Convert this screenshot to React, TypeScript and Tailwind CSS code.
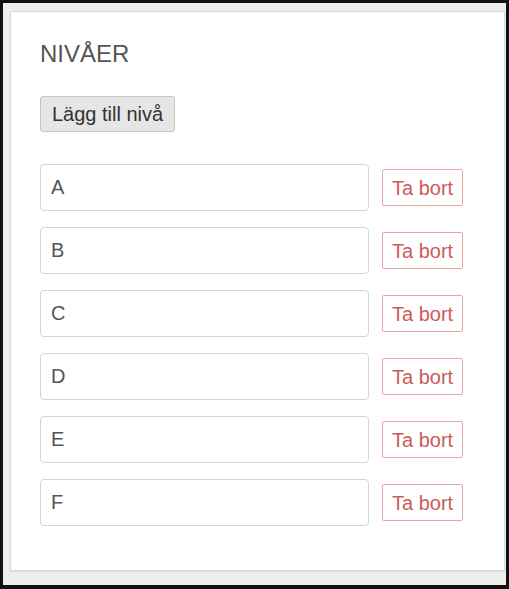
import { useState } from 'react';

const initialLevels = ['A', 'B', 'C', 'D', 'E', 'F'];

export default function App() {
  const [levels, setLevels] = useState<string[]>(initialLevels);

  const addLevel = () => setLevels((prev) => [...prev, '']);
  const removeLevel = (index: number) => setLevels((prev) => prev.filter((_, i) => i !== index));
  const updateLevel = (index: number, value: string) =>
    setLevels((prev) => prev.map((level, i) => (i === index ? value : level)));

  return (
    <div className="w-[509px] h-[589px] overflow-hidden border-l-[3px] border-t-[3px] border-r-[3px] border-b-[4px] border-[#111] bg-[#eeeeee] pl-[7px] pt-[8px] pr-px font-['Liberation_Sans',Arial,sans-serif]">
      <section className="h-[560px] bg-white border border-[#d9d9d9] rounded-tl-[2px] shadow-[0_1px_2px_rgba(0,0,0,0.08)] pl-[29px] pt-[28px]">
        <h2 className="text-[24px] leading-[28px] text-[#555555] font-normal">NIVÅER</h2>

        <button
          type="button"
          onClick={addLevel}
          className="mt-[28px] h-[36px] px-[11px] text-[20px] leading-[22px] text-[#333333] bg-[#e6e6e6] border border-[#c6c6c6] rounded-[3px]"
        >
          Lägg till nivå
        </button>

        <div className="mt-[32px] flex flex-col gap-[16px]">
          {levels.map((level, i) => (
            <div key={i} className="flex items-center gap-[13px]">
              <input
                type="text"
                value={level}
                onChange={(e) => updateLevel(i, e.target.value)}
                className="w-[329px] h-[47px] pl-[10px] text-[20px] text-[#555555] bg-white border border-[#d4d4d4] rounded-[4px] outline-none"
              />
              <button
                type="button"
                onClick={() => removeLevel(i)}
                className="h-[37px] px-[9px] text-[20px] leading-[22px] text-[#d05a5a] bg-white border border-[#eba3a3] rounded-[2px]"
              >
                Ta bort
              </button>
            </div>
          ))}
        </div>
      </section>
    </div>
  );
}
